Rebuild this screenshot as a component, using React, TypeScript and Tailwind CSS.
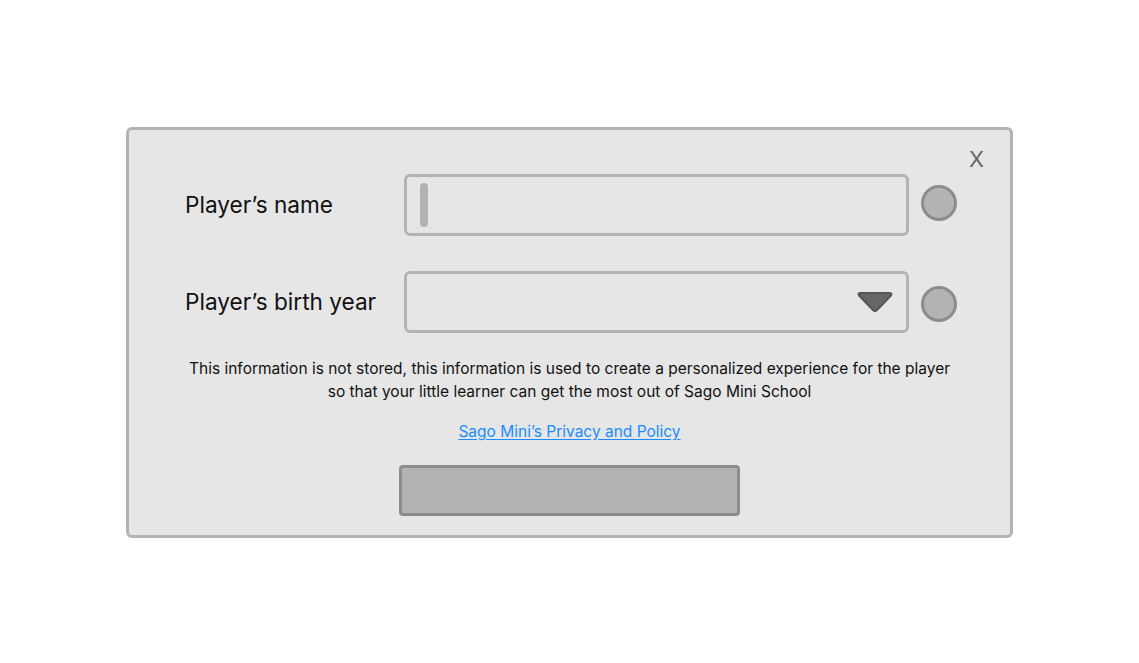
import React from "react";

function StatusDot({ offset }: { offset: string }) {
  return (
    <div
      className={`w-[36px] h-[36px] rounded-full bg-[#b3b3b3] border-[3px] border-[#8c8c8c] shrink-0 self-start ml-[12px] ${offset}`}
    />
  );
}

export default function App() {
  return (
    <main
      className="min-h-[663px] bg-white pt-[127px]"
      style={{ fontFamily: "Inter, 'Noto Sans', sans-serif" }}
    >
      <div className="relative mx-auto w-[887px] h-[411px] bg-[#e6e6e6] border-[3px] border-[#b3b3b3] rounded-[6px]">
        <button className="absolute right-[26px] top-[18px] text-[22px] leading-none text-[#666666]">
          X
        </button>

        <div className="pl-[56px] pt-[44px]">
          <div className="flex items-center">
            <label className="w-[219px] text-[22.6px] text-[#111111]">
              Player’s name
            </label>
            <div className="w-[505px] h-[62px] border-[3px] border-[#b3b3b3] rounded-[6px] flex items-center pl-[13px]">
              <div className="w-[8px] h-[44px] rounded-full bg-[#b3b3b3]" />
            </div>
            <StatusDot offset="mt-[11px]" />
          </div>

          <div className="flex items-center mt-[35px]">
            <label className="w-[219px] text-[22.6px] text-[#111111]">
              Player’s birth year
            </label>
            <div className="w-[505px] h-[62px] border-[3px] border-[#b3b3b3] rounded-[6px] flex items-center justify-end pr-[12px]">
              <svg width="38" height="22" viewBox="0 0 38 22">
                <path
                  d="M5 2 H33 Q37 2 34.5 5 L21 19 Q19 21 17 19 L3.5 5 Q1 2 5 2 Z"
                  fill="#666666"
                  stroke="#555555"
                  strokeWidth="2"
                  strokeLinejoin="round"
                />
              </svg>
            </div>
            <StatusDot offset="mt-[15px]" />
          </div>
        </div>

        <div className="mt-[24px] text-center text-[15.5px] leading-[23px] text-[#111111]">
          <p>
            This information is not stored, this information is used to create
            a personalized experience for the player
            <br />
            so that your little learner can get the most out of Sago Mini School
          </p>
          <a
            href="#"
            className="inline-block mt-[17px] text-[#1a8cff] underline underline-offset-2"
          >
            Sago Mini’s Privacy and Policy
          </a>
        </div>

        <div className="flex justify-center mt-[22px]">
          <button className="w-[341px] h-[51px] bg-[#b3b3b3] border-[3px] border-[#8c8c8c] rounded-[4px]" />
        </div>
      </div>
    </main>
  );
}
